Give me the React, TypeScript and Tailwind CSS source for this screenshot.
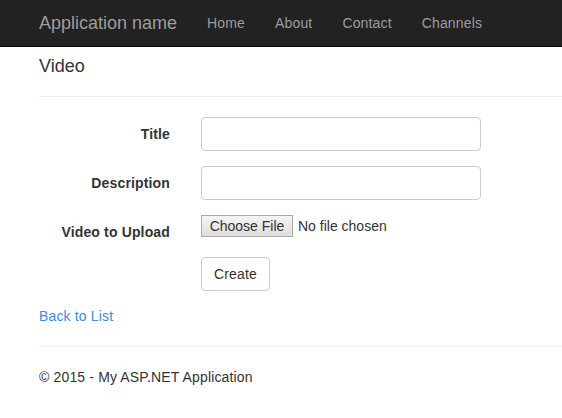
export default function App() {
  const font = { fontFamily: '"Liberation Sans", Arial, sans-serif' };
  return (
    <div className="min-h-[418px] bg-white text-[14px] leading-[20px] tracking-[0.15px] text-[#333]" style={font}>
      <nav className="flex h-[47px] items-stretch border-b border-[#080808] bg-[#222] pl-[24px]">
        <a className="flex items-center px-[15px] text-[18px] tracking-normal text-[#9d9d9d]">Application name</a>
        <ul className="flex items-stretch">
          {["Home", "About", "Contact", "Channels"].map((item) => (
            <li key={item} className="flex items-center px-[15px] text-[#9d9d9d]">
              {item}
            </li>
          ))}
        </ul>
      </nav>

      <div className="pl-[39px]">
        <h4 className="mt-[9px] text-[18px] leading-[20px] tracking-normal text-[#333]">Video</h4>
        <hr className="mt-[20px] mb-[20px] border-t border-[#eee]" />

        <form className="flex flex-col">
          <div className="mb-[15px] flex items-start">
            <label className="w-[131px] pt-[7px] text-right font-bold">Title</label>
            <input className="ml-[31px] h-[34px] w-[280px] rounded-[4px] border border-[#ccc] px-[12px]" />
          </div>
          <div className="mb-[15px] flex items-start">
            <label className="w-[131px] pt-[7px] text-right font-bold">Description</label>
            <input className="ml-[31px] h-[34px] w-[280px] rounded-[4px] border border-[#ccc] px-[12px]" />
          </div>
          <div className="mb-[15px] flex items-start">
            <label className="w-[131px] pt-[7px] text-right font-bold">Video to Upload</label>
            <div className="ml-[31px] flex items-center tracking-normal">
              <span className="flex h-[22px] w-[92px] items-center justify-center border border-[#a9a9a9] bg-gradient-to-b from-[#f4f4f4] to-[#dedede] text-[14px]">
                Choose File
              </span>
              <span className="ml-[5px] text-[14px]">No file chosen</span>
            </div>
          </div>
          <div className="mb-[15px] flex">
            <div className="w-[131px]" />
            <button
              type="button"
              className="ml-[31px] h-[34px] rounded-[4px] border border-[#ccc] bg-white px-[12px] text-[#333]"
            >
              Create
            </button>
          </div>
        </form>

        <a className="block text-[#428bca]">Back to List</a>

        <hr className="mt-[20px] mb-[20px] border-t border-[#eee]" />
        <footer>
          <p>© 2015 - My ASP.NET Application</p>
        </footer>
      </div>
    </div>
  );
}
